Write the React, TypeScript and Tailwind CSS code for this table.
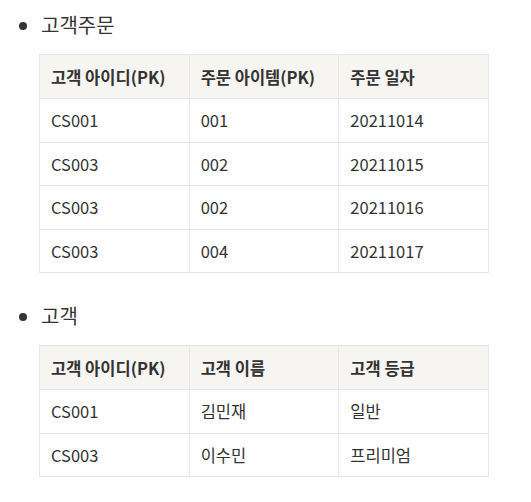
import React from 'react';

type Table = {
  head: string[];
  rows: string[][];
};

const sections: { title: string; table: Table }[] = [
  {
    title: '고객주문',
    table: {
      head: ['고객 아이디(PK)', '주문 아이템(PK)', '주문 일자'],
      rows: [
        ['CS001', '001', '20211014'],
        ['CS003', '002', '20211015'],
        ['CS003', '002', '20211016'],
        ['CS003', '004', '20211017'],
      ],
    },
  },
  {
    title: '고객',
    table: {
      head: ['고객 아이디(PK)', '고객 이름', '고객 등급'],
      rows: [
        ['CS001', '김민재', '일반'],
        ['CS003', '이수민', '프리미엄'],
      ],
    },
  },
];

export default function App() {
  return (
    <div
      className="min-h-[502px] w-[531px] bg-white text-[#333333]"
      style={{ fontFamily: '"Noto Sans CJK KR", "Noto Sans", sans-serif' }}
    >
      <ul className="list-disc pl-[41px] pt-3">
        {sections.map((s) => (
          <li
            key={s.title}
            className="mb-[30px] text-[20px] leading-[26px] marker:text-[20px] marker:text-[#333333]"
          >
            {s.title}
            {/* 표 */}
            <table className="-ml-[2px] mt-4 w-[450px] table-fixed border-collapse text-[16.5px] leading-[24px]">
              <thead>
                <tr className="h-[44px] bg-[#f6f5f2]">
                  {s.table.head.map((h) => (
                    <th key={h} className="border border-[#e6e6e6] px-[11px] text-left font-semibold">
                      {h}
                    </th>
                  ))}
                </tr>
              </thead>
              <tbody>
                {s.table.rows.map((r, i) => (
                  <tr key={i} className="h-[43.5px]">
                    {r.map((c, j) => (
                      <td key={j} className="border border-[#e6e6e6] px-[11px] font-normal">
                        {c}
                      </td>
                    ))}
                  </tr>
                ))}
              </tbody>
            </table>
          </li>
        ))}
      </ul>
    </div>
  );
}
